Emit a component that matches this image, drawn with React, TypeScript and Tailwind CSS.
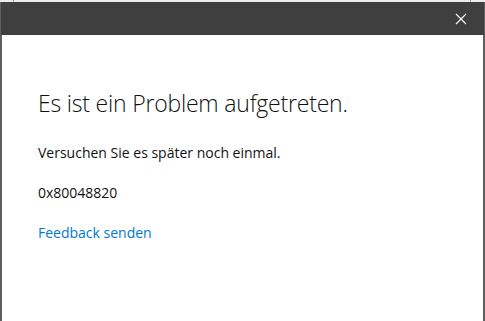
export default function App() {
  return (
    <div className="h-[321px] w-[485px] overflow-hidden bg-[#ececec] flex flex-col" style={{ fontFamily: '"Open Sans", "Noto Sans", sans-serif' }}>
      <div className="h-[2px] shrink-0 relative">
        <div className="absolute left-[13px] top-0 h-[2px] w-px bg-[#9a9a9a]" />
        <div className="absolute left-[470px] top-0 h-[2px] w-px bg-[#9a9a9a]" />
      </div>
      <div className="flex-1 flex flex-col border-x-2 border-[#5f5f5f] bg-white">
        <div className="h-[33px] shrink-0 bg-[#3f3f3f] flex items-center justify-end pr-[17px] -mx-[1px]">
          <svg width="12" height="12" viewBox="0 0 12 12" className="block">
            <path d="M1 1 L11 11 M11 1 L1 11" stroke="#ffffff" strokeWidth="1.1" />
          </svg>
        </div>
        <div className="pl-[36px] pt-[53px] text-[#111111]">
          <h1 className="text-[23px] leading-[30px] font-light tracking-[-0.2px]">Es ist ein Problem aufgetreten.</h1>
          <p className="mt-[25px] text-[14px] leading-[20px]">Versuchen Sie es später noch einmal.</p>
          <p className="mt-[20px] text-[14px] leading-[20px]">0x80048820</p>
          <p className="mt-[20px] text-[14px] leading-[20px] text-[#0078d7]">Feedback senden</p>
        </div>
      </div>
    </div>
  );
}
